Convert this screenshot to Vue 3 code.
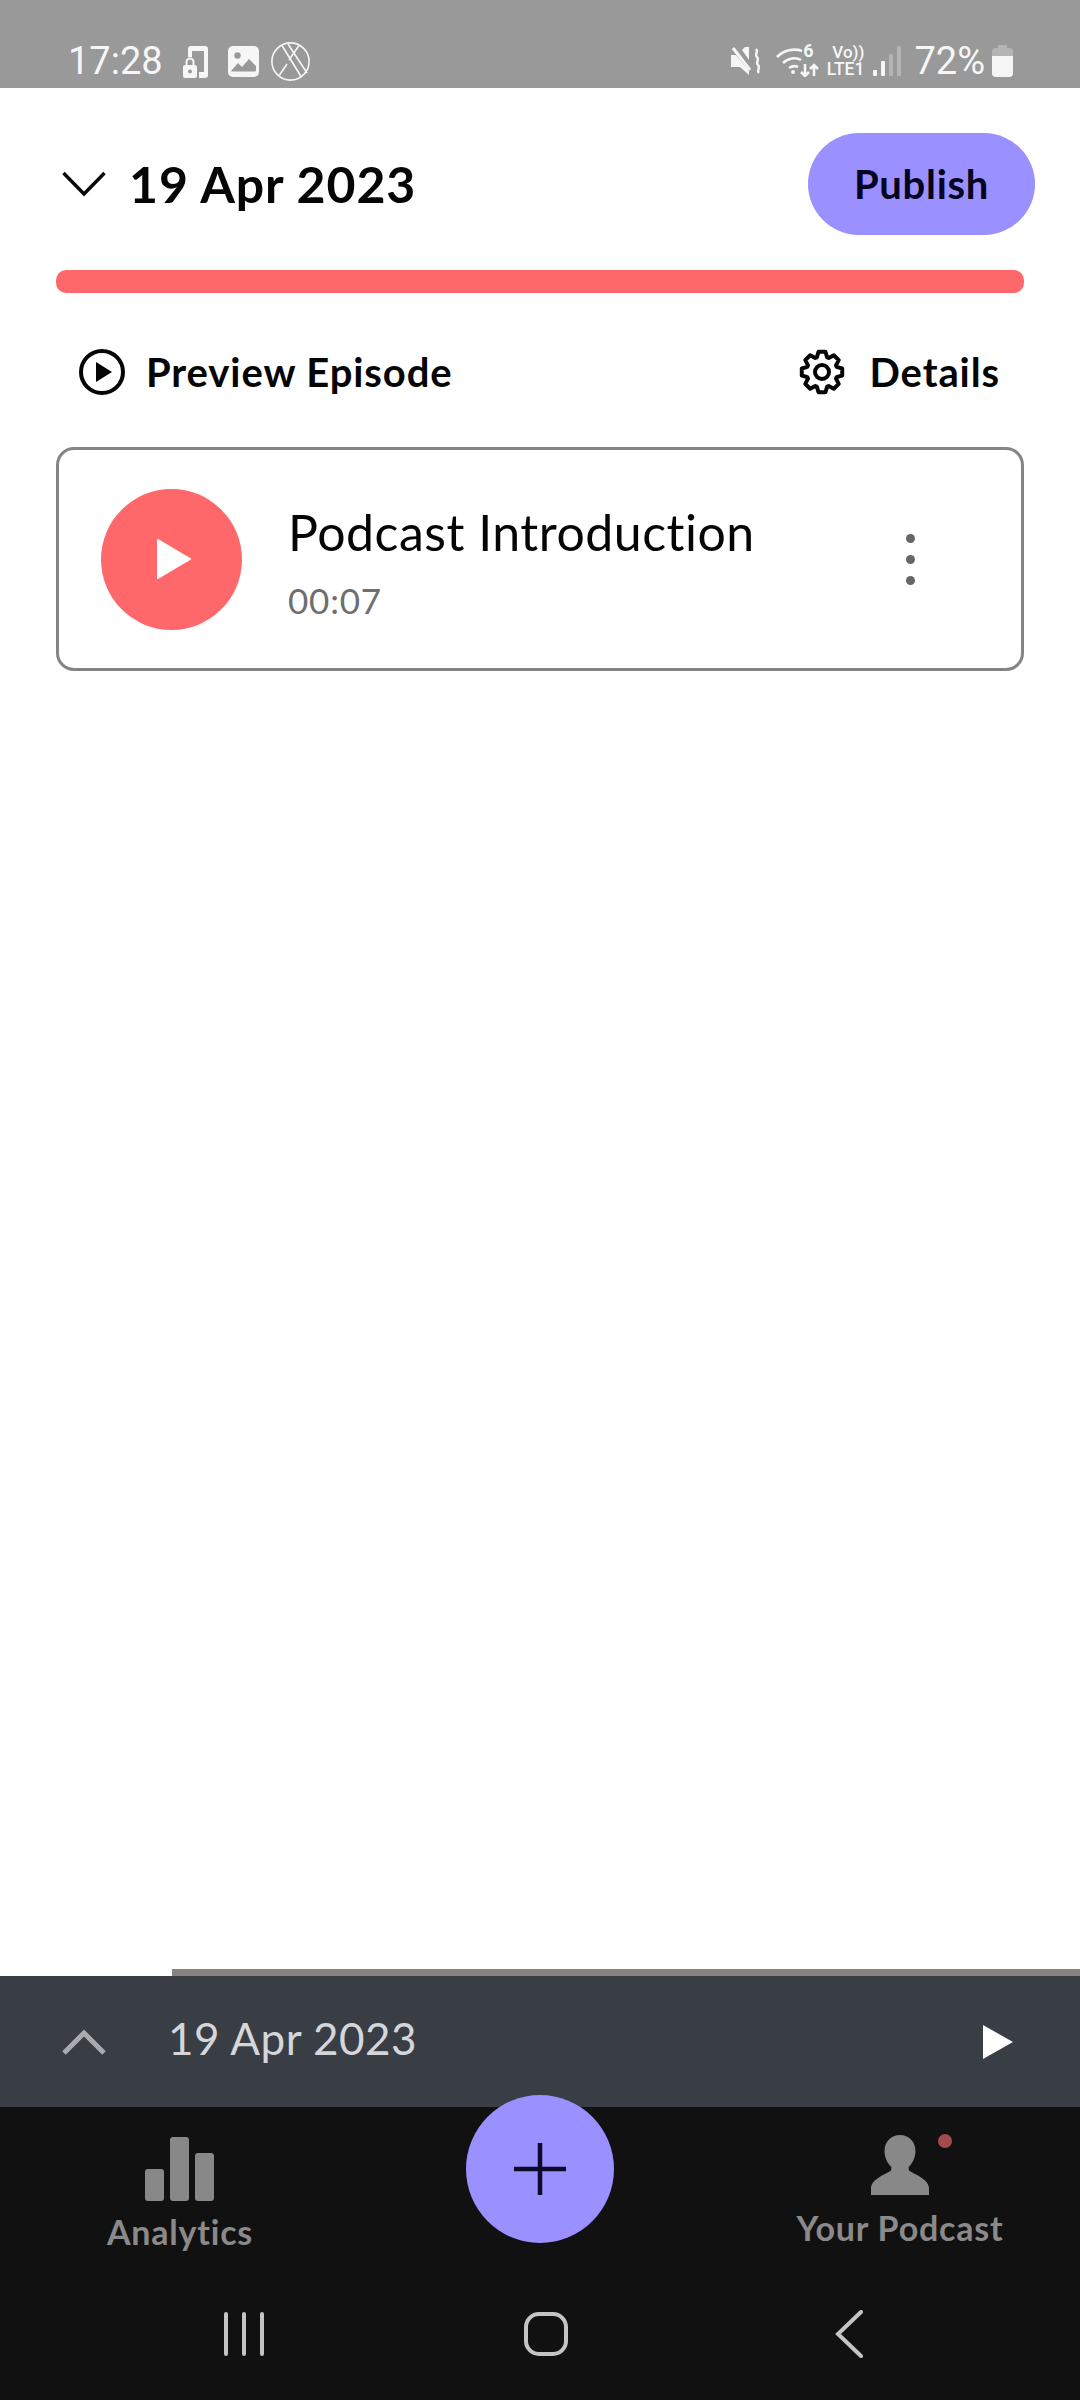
<template>
  <div class="screen">
    <div class="status-bar">
      <div class="status-left">
        <span class="clock">17:28</span>
        <svg class="ic-phone" width="26" height="33" viewBox="0 0 26 33">
          <path d="M5 12V4a3 3 0 0 1 3-3h14a3 3 0 0 1 3 3v26a3 3 0 0 1-3 3h-6v-6h5V6H9v6z" fill="#f6f6f6" />
          <rect x="0" y="20" width="14" height="13" rx="2" fill="#f6f6f6" />
          <path d="M3.500 20v-3a3.500 3.500 0 0 1 7 0v3" fill="none" stroke="#f6f6f6" stroke-width="2" />
          <circle cx="7" cy="26.500" r="2" fill="#999" />
        </svg>
        <svg class="ic-photo" width="31" height="31" viewBox="0 0 31 31">
          <rect width="31" height="31" rx="5" fill="#f6f6f6" />
          <circle cx="9.500" cy="9.500" r="3.200" fill="#999" />
          <path d="M3 25l7-8 4 4 7-8 7 7v4a1.500 1.500 0 0 1-1.500 1.500H4.500A1.500 1.500 0 0 1 3 25z" fill="#999" />
        </svg>
        <svg class="ic-nope" width="39" height="39" viewBox="0 0 39 39" fill="none" stroke="#f6f6f6" stroke-width="1.600">
          <circle cx="19.500" cy="19.500" r="18.600" />
          <path d="M11 3.500l19 31M17 2l19 29M28 3.500L18 18M16 22L8.500 33" />
        </svg>
      </div>
      <div class="status-right">
        <svg class="ic-mute" width="31" height="29" viewBox="0 0 31 29">
          <path d="M11 3l3-3h4v13zM0 8h5l13 16v4l-9-8H0z" fill="#f6f6f6" />
          <path d="M2 1l17 22" stroke="#f6f6f6" stroke-width="3" />
          <path d="M25 2c3 3-2 5 1 8s-2 5 1 8-2 5 1 8" fill="none" stroke="#f6f6f6" stroke-width="2.400" />
        </svg>
        <div class="wifi">
          <svg width="43" height="31" viewBox="0 0 43 31" fill="none" stroke="#f6f6f6" stroke-width="2.600">
            <path d="M1 11c7-7 17-9 25-6M7 17c5-5 13-6 18-3M13 22c3-2 7-2 9-1" />
            <circle cx="17" cy="26" r="2" fill="#f6f6f6" stroke="none" />
            <path d="M29 18v12M25 26l4 4 4-4M38 30V19M34 23l4-4 4 4" />
          </svg>
          <span class="wifi-six">6</span>
        </div>
        <div class="volte">
          <span class="vo">Vo))</span>
          <span class="lte">LTE1</span>
        </div>
        <svg class="ic-signal" width="28" height="30" viewBox="0 0 28 30">
          <rect x="0" y="24" width="4" height="6" rx="1" fill="#f6f6f6" />
          <rect x="8" y="15" width="4" height="15" rx="1" fill="#f6f6f6" />
          <rect x="16" y="8" width="4" height="22" rx="1" fill="#b4b4b4" />
          <rect x="24" y="0" width="4" height="30" rx="1" fill="#b4b4b4" />
        </svg>
        <span class="battery-text">72%</span>
        <div class="battery">
          <div class="battery-cap"></div>
          <div class="battery-body"><div class="battery-fill"></div></div>
        </div>
      </div>
    </div>

    <main class="content">
      <div class="episode-header">
        <div class="episode-date">
          <svg width="44" height="26" viewBox="0 0 44 26" fill="none" stroke="#0a0a0a" stroke-width="3.400">
            <path d="M1.500 2L22 23 42.500 2" />
          </svg>
          <h1>19 Apr 2023</h1>
        </div>
        <button class="publish">Publish</button>
      </div>
      <div class="progress"></div>
      <div class="actions">
        <div class="action action-preview">
          <svg width="46" height="46" viewBox="0 0 46 46">
            <circle cx="23" cy="23" r="21" fill="none" stroke="#050505" stroke-width="4" />
            <path d="M17 13l16 10-16 10z" fill="#050505" />
          </svg>
          <span>Preview Episode</span>
        </div>
        <div class="action">
          <svg width="46" height="46" viewBox="0 0 46 46" fill="none" stroke="#050505" stroke-width="4" stroke-linejoin="round">
            <circle cx="23" cy="23" r="7" />
            <path :d="gearPath" />
          </svg>
          <span>Details</span>
        </div>
      </div>
      <div class="segment">
        <div class="segment-play">
          <svg width="36" height="42" viewBox="0 0 36 42">
            <path d="M2 2l32 19L2 40z" fill="#fff" stroke="#fff" stroke-width="2" stroke-linejoin="round" />
          </svg>
        </div>
        <div class="segment-info">
          <div class="segment-title">Podcast Introduction</div>
          <div class="segment-time">00:07</div>
        </div>
        <div class="segment-menu">
          <i></i><i></i><i></i>
        </div>
      </div>
    </main>

    <div class="player-line"></div>
    <div class="player">
      <svg width="44" height="26" viewBox="0 0 44 26" fill="none" stroke="#a9abaf" stroke-width="5">
        <path d="M2 24L22 4l20 20" />
      </svg>
      <span class="player-date">19 Apr 2023</span>
      <svg class="player-play" width="30" height="34" viewBox="0 0 30 34">
        <path d="M0 0l30 17L0 34z" fill="#fff" />
      </svg>
    </div>

    <nav class="tabs">
      <div class="tab tab-analytics">
        <svg width="70" height="64" viewBox="0 0 70 64">
          <rect x="0" y="32" width="19" height="32" rx="3" fill="#888" />
          <rect x="25" y="0" width="19" height="64" rx="3" fill="#888" />
          <rect x="50" y="16" width="19" height="48" rx="3" fill="#888" />
        </svg>
        <span>Analytics</span>
      </div>
      <div class="tab tab-podcast">
        <div class="avatar">
          <svg width="58" height="60" viewBox="0 0 60 64" preserveAspectRatio="none">
            <path d="M30 0c9 0 16 7 16 17 0 7-3 13-7 17v3c0 3 20 8 21 19v8H0v-8c1-11 21-16 21-19v-3c-4-4-7-10-7-17C14 7 21 0 30 0z" fill="#888" />
          </svg>
          <b class="dot"></b>
        </div>
        <span>Your Podcast</span>
      </div>
      <button class="fab">
        <svg width="52" height="52" viewBox="0 0 52 52" stroke="#0d0a2a" stroke-width="4.500">
          <path d="M26 0v52M0 26h52" />
        </svg>
      </button>
    </nav>

    <div class="system-nav">
      <svg width="44" height="44" viewBox="0 0 44 44" stroke="#c4c4c4" stroke-width="4" stroke-linecap="round">
        <path d="M4 2v40M22 2v40M40 2v40" />
      </svg>
      <svg width="44" height="44" viewBox="0 0 44 44" fill="none" stroke="#c4c4c4" stroke-width="4">
        <rect x="2" y="2" width="40" height="40" rx="13" />
      </svg>
      <svg width="28" height="48" viewBox="0 0 28 48" fill="none" stroke="#c4c4c4" stroke-width="4" stroke-linecap="round">
        <path d="M26 2L3 24l23 22" />
      </svg>
    </div>
  </div>
</template>

<script setup>
// 8-tooth outline for the Details gear
const gearPoints = []
for (let i = 0; i < 8; i++) {
  const mid = (i * Math.PI) / 4
  const corners = [[15.5, -0.34], [20.5, -0.17], [20.5, 0.17], [15.5, 0.34]]
  for (const [r, off] of corners) {
    const x = 23 + r * Math.sin(mid + off)
    const y = 23 - r * Math.cos(mid + off)
    gearPoints.push(`${x.toFixed(2)} ${y.toFixed(2)}`)
  }
}
const gearPath = `M${gearPoints.join('L')}z`
</script>

<style>
html, body {
  margin: 0;
  background: #fff;
}
</style>

<style scoped>
.screen {
  width: 1080px;
  height: 2400px;
  display: flex;
  flex-direction: column;
  overflow: hidden;
  font-family: Lato, "Liberation Sans", sans-serif;
  font-variant-ligatures: none;
  background: #fff;
}

.status-bar {
  height: 88px;
  flex-shrink: 0;
  box-sizing: border-box;
  padding: 38px 67px 0 68px;
  background: #999;
  color: #f6f6f6;
  font-family: Roboto, sans-serif;
  display: flex;
  justify-content: space-between;
  align-items: flex-start;
}

.status-left,
.status-right {
  display: flex;
  align-items: center;
  height: 46px;
}

.clock {
  font-size: 38px;
  margin-right: 20px;
}

.ic-phone { margin-right: 19px; }
.ic-photo { margin-right: 12px; }

.ic-mute { margin-right: 14px; }

.wifi {
  position: relative;
  width: 43px;
  height: 31px;
  margin-right: 7px;
}

.wifi svg { display: block; }

.wifi-six {
  position: absolute;
  right: 6px;
  top: -4px;
  font-size: 18px;
  font-weight: 700;
  line-height: 18px;
}

.volte {
  width: 38px;
  margin-right: 9px;
  display: flex;
  flex-direction: column;
  align-items: flex-end;
  font-weight: 500;
}

.vo {
  font-size: 17px;
  line-height: 16px;
}

.lte {
  font-size: 17.5px;
  line-height: 18px;
}

.ic-signal { margin-right: 13px; }

.battery-text {
  font-size: 38px;
  margin-right: 7px;
}

.battery {
  width: 21px;
  display: flex;
  flex-direction: column;
  align-items: center;
}

.battery-cap {
  width: 9px;
  height: 3px;
  background: #b4b4b4;
  border-radius: 1px 1px 0 0;
}

.battery-body {
  width: 21px;
  height: 29px;
  background: #b4b4b4;
  border-radius: 4px;
  overflow: hidden;
  display: flex;
  align-items: flex-end;
}

.battery-fill {
  width: 100%;
  height: 72%;
  background: #f6f6f6;
}

.content {
  flex: 1;
  min-height: 0;
  box-sizing: border-box;
  padding: 45px 56px 0;
}

.episode-header {
  display: flex;
  justify-content: space-between;
  align-items: center;
  margin-right: -11px;
}

.episode-date {
  display: flex;
  align-items: center;
  gap: 23px;
  padding-left: 6px;
}

h1 {
  margin: 0;
  font-size: 50px;
  font-weight: 700;
  letter-spacing: 0.9px;
  color: #050505;
}

.publish {
  width: 227px;
  height: 102px;
  border: 0;
  padding: 0;
  border-radius: 51px;
  background: #9a90ff;
  color: #05051f;
  font-family: inherit;
  font-size: 40px;
  font-weight: 700;
  letter-spacing: 0.7px;
}

.progress {
  height: 23px;
  margin-top: 35px;
  border-radius: 10px;
  background: #ff686b;
}

.actions {
  display: flex;
  justify-content: space-between;
  margin-top: 56px;
  padding: 0 24px 0 23px;
}

.action {
  display: flex;
  align-items: center;
  gap: 25px;
  font-size: 40px;
  line-height: 46px;
  font-weight: 700;
  letter-spacing: 0.9px;
  color: #050505;
}

.action-preview { gap: 21px; }

.segment {
  height: 224px;
  box-sizing: border-box;
  margin-top: 52px;
  padding: 0 42px;
  border: 3px solid #858585;
  border-radius: 18px;
  display: flex;
  align-items: center;
}

.segment-play {
  width: 141px;
  height: 141px;
  flex-shrink: 0;
  border-radius: 50%;
  background: #ff686b;
  display: flex;
  align-items: center;
  justify-content: center;
}

.segment-play svg { margin-left: 5px; }

.segment-info {
  flex: 1;
  margin-left: 46px;
  padding-top: 5px;
}

.segment-title {
  font-size: 50px;
  line-height: 58px;
  letter-spacing: 0.5px;
  color: #050505;
}

.segment-time {
  margin-top: 19px;
  font-size: 35px;
  line-height: 40px;
  letter-spacing: 0.8px;
  color: #6e6e6e;
}

.segment-menu {
  display: flex;
  flex-direction: column;
  gap: 12px;
  margin-right: 64px;
}

.segment-menu i {
  width: 9px;
  height: 9px;
  border-radius: 50%;
  background: #666;
}

.player-line {
  height: 7px;
  flex-shrink: 0;
  margin-left: 172px;
  background: #85827f;
}

.player {
  height: 131px;
  flex-shrink: 0;
  box-sizing: border-box;
  padding: 0 67px 0 62px;
  background: #393d44;
  display: flex;
  align-items: center;
}

.player-date {
  flex: 1;
  margin-left: 62px;
  padding-bottom: 8px;
  font-size: 44px;
  letter-spacing: 0.5px;
  color: #d4d6da;
}

.tabs {
  position: relative;
  height: 162px;
  flex-shrink: 0;
  background: #111;
  display: flex;
  justify-content: space-between;
}

.tab {
  width: 360px;
  display: flex;
  flex-direction: column;
  align-items: center;
  color: #8a8a8a;
  font-size: 34px;
  line-height: 40px;
  font-weight: 700;
  letter-spacing: 0.8px;
}

.tab svg { display: block; }

.tab-analytics { padding-top: 30px; }
.tab-analytics span { margin-top: 11px; }

.tab-podcast { padding-top: 28px; }
.tab-podcast span { margin-top: 13px; }

.avatar { position: relative; }

.dot {
  position: absolute;
  top: -1px;
  right: -23px;
  width: 14px;
  height: 14px;
  border-radius: 50%;
  background: #a34a4c;
}

.fab {
  position: absolute;
  left: 466px;
  top: -12px;
  width: 148px;
  height: 148px;
  padding: 0;
  border: 0;
  border-radius: 50%;
  background: #9a90ff;
  display: flex;
  align-items: center;
  justify-content: center;
}

.system-nav {
  height: 131px;
  flex-shrink: 0;
  box-sizing: border-box;
  padding: 0 0 2px;
  background: #111;
  display: flex;
  align-items: center;
}

.system-nav svg:nth-child(1) { margin-left: 222px; }
.system-nav svg:nth-child(2) { margin-left: 258px; }
.system-nav svg:nth-child(3) { margin-left: 267px; }
</style>
